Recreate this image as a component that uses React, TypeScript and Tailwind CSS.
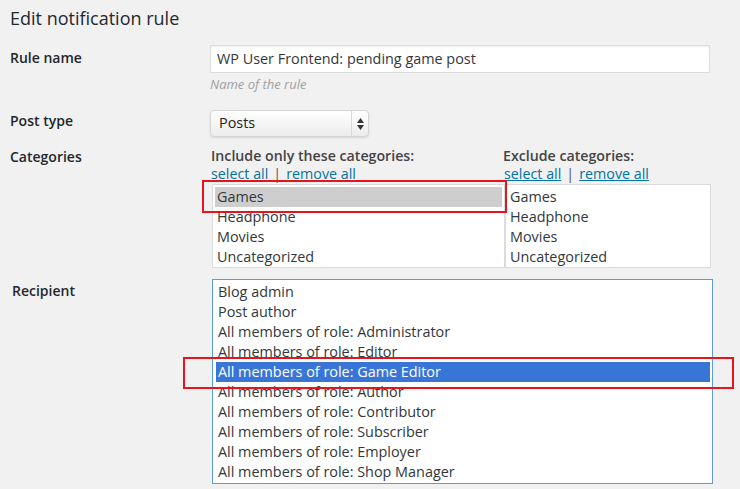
const INCLUDE = ['Games', 'Headphone', 'Movies', 'Uncategorized']

const RECIPIENTS = [
  'Blog admin',
  'Post author',
  'All members of role: Administrator',
  'All members of role: Editor',
  'All members of role: Game Editor',
  'All members of role: Author',
  'All members of role: Contributor',
  'All members of role: Subscriber',
  'All members of role: Employer',
  'All members of role: Shop Manager',
]

function Label({ children, className = '' }: { children: React.ReactNode; className?: string }) {
  return (
    <div className={`w-[200px] shrink-0 text-[14px] leading-[20px] font-semibold text-[#23282d] ${className}`}>
      {children}
    </div>
  )
}

function Links() {
  return (
    <p className="text-[14.3px] leading-[18px] text-[#0074a2]">
      <span className="underline">select all</span>
      <span className="text-[#555] mx-[5px]">|</span>
      <span className="underline">remove all</span>
    </p>
  )
}

function CategoryList({ selected, className = '' }: { selected?: string; className?: string }) {
  return (
    <div className={`h-[84px] border border-[#dcdcdc] bg-white pt-[2px] px-[2px] ${className}`}>
      {INCLUDE.map(c => (
        <div
          key={c}
          className={`h-[20px] pl-[2px] text-[14.4px] leading-[20px] text-[#32373c] ${c === selected ? 'bg-[#cecece]' : ''}`}
        >
          {c}
        </div>
      ))}
    </div>
  )
}

export default function App() {
  return (
    <div className="relative w-[740px] h-[489px] overflow-hidden bg-[#f1f1f1] pl-[10px] font-['Open_Sans',sans-serif] text-[#32373c]">
      <h2 className="pt-[5px] text-[18px] leading-[26px] text-[#23282d]">Edit notification rule</h2>

      {/* Rule name */}
      <div className="mt-[14px] flex">
        <Label className="pt-[3px]">Rule name</Label>
        <div>
          <div className="w-[500px] h-[28px] border border-[#dddddd] bg-white px-[6px] text-[14.4px] leading-[26px] text-[#32373c] shadow-[inset_0_1px_2px_rgba(0,0,0,0.07)]">
            WP User Frontend: pending game post
          </div>
          <p className="mt-[2px] text-[13px] leading-[18px] italic text-[#a0a0a0]">Name of the rule</p>
        </div>
      </div>

      {/* Post type */}
      <div className="mt-[17px] flex">
        <Label className="pt-[1px]">Post type</Label>
        <div className="flex w-[159px] h-[27px] rounded-[4px] border border-[#d5d5d5] bg-gradient-to-b from-white to-[#ececec] shadow-[0_1px_2px_rgba(0,0,0,0.12)]">
          <span className="flex-1 pl-[8px] text-[14.4px] leading-[23px] text-[#222]">Posts</span>
          <span className="w-[17px] border-l border-[#d8d8d8] flex flex-col items-center justify-center gap-[2px]">
            <svg width="7" height="5" viewBox="0 0 7 5"><path d="M3.5 0L7 5H0z" fill="#333" /></svg>
            <svg width="7" height="5" viewBox="0 0 7 5"><path d="M0 0h7L3.5 5z" fill="#333" /></svg>
          </span>
        </div>
      </div>

      {/* Categories */}
      <div className="mt-[9px] flex">
        <Label className="pt-[1px]">Categories</Label>
        <div className="flex">
          <div className="w-[294px] pl-[1px]">
            <p className="text-[14.2px] leading-[19px] font-semibold text-[#444]">Include only these categories:</p>
            <Links />
            <CategoryList selected="Games" className="mt-[1px] ml-[1px] w-[293px]" />
          </div>
          <div className="w-[208px] -ml-[1px]">
            <p className="text-[14.2px] leading-[19px] font-semibold text-[#444]">Exclude categories:</p>
            <div className="pl-[1px]"><Links /></div>
            <CategoryList className="mt-[1px] ml-[2px] w-[206px]" />
          </div>
        </div>
      </div>

      {/* Recipient */}
      <div className="mt-[11px] flex">
        <Label className="pl-[2px] pt-[2px]">Recipient</Label>
        <div className="ml-[2px] w-[501px] h-[205px] border border-[#5b9dd9] bg-white pt-[2px] pl-[3px] pr-[2px]">
          {RECIPIENTS.map(r => (
            <div
              key={r}
              className={`h-[20px] pl-[2px] text-[14.4px] leading-[20px] ${
                r.endsWith('Game Editor') ? 'bg-[#3875d7] text-white' : 'text-[#32373c]'
              }`}
            >
              {r}
            </div>
          ))}
        </div>
      </div>

      {/* red annotation boxes */}
      <div className="absolute left-[202px] top-[180px] w-[305px] h-[33px] border-2 border-[#e8141b]" />
      <div className="absolute left-[183px] top-[357px] w-[551px] h-[32px] border-2 border-[#e8141b]" />
    </div>
  )
}
